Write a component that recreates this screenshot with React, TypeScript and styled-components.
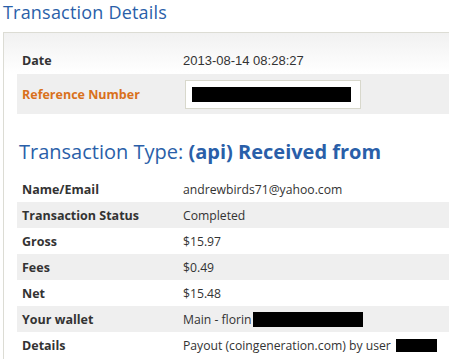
import React from "react";
import styled, { createGlobalStyle } from "styled-components";

const Global = createGlobalStyle`
  html, body {
    margin: 0;
    padding: 0;
    background: #ffffff;
    overflow: hidden;
  }
`;

const Page = styled.div`
  width: 449px;
  height: 359px;
  overflow: hidden;
  font-family: "Open Sans", "DejaVu Sans", sans-serif;
`;

const Title = styled.h1`
  margin: 0;
  padding: 0 0 0 3px;
  height: 32px;
  box-sizing: border-box;
  font-size: 18px;
  line-height: 24px;
  font-weight: 400;
  color: #2a5fa9;
  letter-spacing: 0.2px;
`;

const Panel = styled.div`
  margin-left: 3px;
  width: 470px;
  border-top: 1px solid #dcdcd4;
  border-left: 1px solid #dcdcd4;
  background: linear-gradient(#f1f1f1 0px, #ffffff 40px);
  padding: 13px 0 0 13px;
  box-sizing: border-box;
  height: 330px;
`;

const Row = styled.div<{ $shade?: boolean; $h: number }>`
  display: grid;
  grid-template-columns: 161px 1fr;
  align-items: center;
  height: ${({ $h }) => $h}px;
  padding-left: 5px;
  background: ${({ $shade }) => ($shade ? "#efefef" : "transparent")};
`;

const Label = styled.div<{ $accent?: boolean }>`
  font-size: 12.5px;
  font-weight: 700;
  color: ${({ $accent }) => ($accent ? "#d9711c" : "#333333")};
`;

const Value = styled.div<{ $arial?: boolean }>`
  font-family: ${({ $arial }) =>
    $arial ? '"Liberation Sans", Arial, sans-serif' : '"Open Sans", sans-serif'};
  font-size: ${({ $arial }) => ($arial ? "13px" : "12.2px")};
  color: #333333;
  display: flex;
  align-items: center;
  white-space: nowrap;
`;

const InputBox = styled.div`
  width: 176px;
  height: 29px;
  box-sizing: border-box;
  border: 1px solid #d8d8cc;
  background: #ffffff;
  margin-left: 2px;
  padding: 6px 9px 6px 6px;
`;

const Redact = styled.span<{ $w: number; $h: number; $gap?: number }>`
  display: inline-block;
  width: ${({ $w }) => $w}px;
  height: ${({ $h }) => $h}px;
  margin-left: ${({ $gap }) => $gap ?? 0}px;
  background: #000000;
`;

const TypeHeading = styled.h2`
  margin: 0;
  height: 62px;
  padding-top: 24px;
  padding-left: 2px;
  box-sizing: border-box;
  font-size: 20px;
  line-height: 28px;
  font-weight: 400;
  color: #2a5fa9;
  b {
    font-weight: 700;
  }
`;

const rows: { label: string; value: React.ReactNode }[] = [
  { label: "Name/Email", value: "andrewbirds71@yahoo.com" },
  { label: "Transaction Status", value: "Completed" },
  { label: "Gross", value: "$15.97" },
  { label: "Fees", value: "$0.49" },
  { label: "Net", value: "$15.48" },
  {
    label: "Your wallet",
    value: (
      <>
        Main - florin
        <Redact $w={110} $h={15} $gap={1} />
      </>
    ),
  },
  {
    label: "Details",
    value: (
      <>
        Payout (coingeneration.com) by user
        <Redact $w={41} $h={13} $gap={5} />
      </>
    ),
  },
];

export default function App() {
  return (
    <Page>
      <Global />
      <Title>Transaction Details</Title>
      <Panel>
        <Row $h={28}>
          <Label>Date</Label>
          <Value $arial>2013-08-14 08:28:27</Value>
        </Row>
        <Row $h={40} $shade>
          <Label $accent>Reference Number</Label>
          <Value>
            <InputBox>
              <Redact $w={159} $h={15} />
            </InputBox>
          </Value>
        </Row>
        <TypeHeading>
          Transaction Type: <b>(api) Received from</b>
        </TypeHeading>
        {rows.map((r, i) => (
          <Row key={r.label} $h={26} $shade={i % 2 === 1}>
            <Label>{r.label}</Label>
            <Value>{r.value}</Value>
          </Row>
        ))}
      </Panel>
    </Page>
  );
}
